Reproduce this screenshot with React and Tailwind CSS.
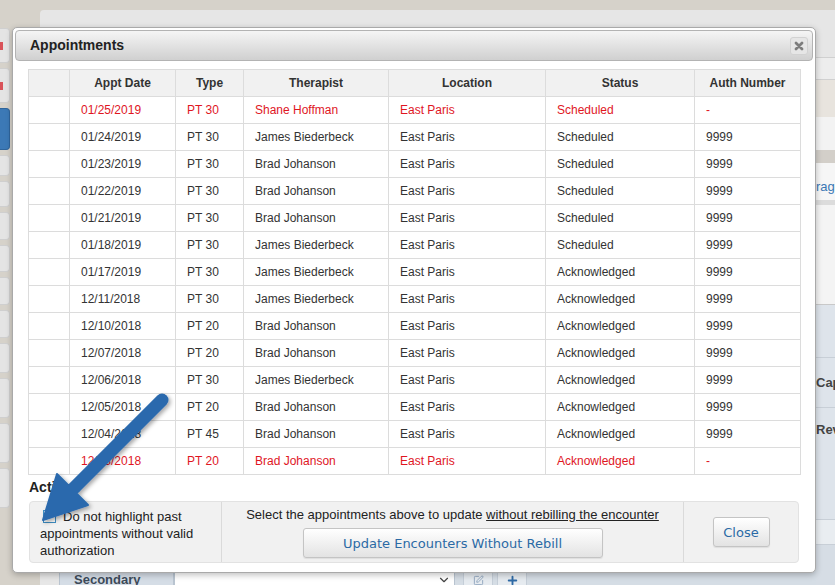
import { Plus, SquarePen, ChevronDown } from 'lucide-react';

const RED = 'text-[#e0161f]';

const rows = [
  ['01/25/2019', 'PT 30', 'Shane Hoffman', 'East Paris', 'Scheduled', '-', true],
  ['01/24/2019', 'PT 30', 'James Biederbeck', 'East Paris', 'Scheduled', '9999'],
  ['01/23/2019', 'PT 30', 'Brad Johanson', 'East Paris', 'Scheduled', '9999'],
  ['01/22/2019', 'PT 30', 'Brad Johanson', 'East Paris', 'Scheduled', '9999'],
  ['01/21/2019', 'PT 30', 'Brad Johanson', 'East Paris', 'Scheduled', '9999'],
  ['01/18/2019', 'PT 30', 'James Biederbeck', 'East Paris', 'Scheduled', '9999'],
  ['01/17/2019', 'PT 30', 'James Biederbeck', 'East Paris', 'Acknowledged', '9999'],
  ['12/11/2018', 'PT 30', 'James Biederbeck', 'East Paris', 'Acknowledged', '9999'],
  ['12/10/2018', 'PT 20', 'Brad Johanson', 'East Paris', 'Acknowledged', '9999'],
  ['12/07/2018', 'PT 20', 'Brad Johanson', 'East Paris', 'Acknowledged', '9999'],
  ['12/06/2018', 'PT 30', 'James Biederbeck', 'East Paris', 'Acknowledged', '9999'],
  ['12/05/2018', 'PT 20', 'Brad Johanson', 'East Paris', 'Acknowledged', '9999'],
  ['12/04/2018', 'PT 45', 'Brad Johanson', 'East Paris', 'Acknowledged', '9999'],
  ['12/03/2018', 'PT 20', 'Brad Johanson', 'East Paris', 'Acknowledged', '-', true],
];

const headers = ['', 'Appt Date', 'Type', 'Therapist', 'Location', 'Status', 'Auth Number'];
const widths = ['w-[41px]', 'w-[106px]', 'w-[68px]', 'w-[145px]', 'w-[157px]', 'w-[149px]', 'w-[106px]'];

const sideButtons = [
  { h: 'h-[35px]', mark: true },
  { h: 'h-[35px]', mark: true },
  { h: 'h-[42px]', blue: true },
  { h: 'h-[21px]' },
  { h: 'h-[26px]' },
  { h: 'h-[28px]' },
  { h: 'h-[27px]' },
  { h: 'h-[28px]' },
  { h: 'h-[28px]' },
  { h: 'h-[30px]' },
  { h: 'h-[40px]' },
  { h: 'h-[40px]' },
  { h: 'h-[40px]' },
];

function Sidebar() {
  return (
    <div className="w-[10px] shrink-0 flex flex-col gap-[5px] pt-[28px]">
      {sideButtons.map((b, i) => (
        <div
          key={i}
          className={`${b.h} shrink-0 rounded-r-[4px] border border-l-0 ${
            b.blue ? 'bg-[#3c79b6] border-[#2f659c]' : 'bg-[#e4e4e4] border-[#cfcfcf]'
          } flex items-center`}
        >
          {b.mark && <div className="w-[3px] h-[8px] bg-[#d9535a]" />}
        </div>
      ))}
    </div>
  );
}

function RightColumn() {
  return (
    <div className="w-[19px] shrink-0 flex flex-col overflow-hidden text-[13px] whitespace-nowrap">
      <div className="h-[22px] bg-[#ededed] border-b border-[#d0d0d0]" />
      <div className="h-[37px] bg-[#e8e4de]" />
      <div className="h-[33px] bg-[#f3f3f3]" />
      <div className="h-[13px] bg-[#d3cfc9]" />
      <div className="h-[37px] bg-[#f6f6f6] flex items-end pb-[4px] text-[#3b78b4]">rage</div>
      <div className="h-[5px] bg-[#dcdcdc]" />
      <div className="h-[100px] bg-[#f4f4f4] border-b border-[#c9c9c9]" />
      <div className="h-[53px] bg-[#dee4eb] border-b border-[#c8cfd7]" />
      <div className="h-[50px] bg-[#dee4eb] border-b border-[#c8cfd7] flex items-center font-bold text-[#444]">Cap</div>
      <div className="h-[112px] bg-[#dee4eb] border-b border-[#c8cfd7] pt-[12px] font-bold text-[#444]">Rev</div>
      <div className="h-[25px] bg-[#e9edf1] border-b border-[#c8cfd7]" />
      <div className="flex-1 bg-[#d6dde5]" />
    </div>
  );
}

function BottomRow() {
  return (
    <div className="mt-auto h-[24px] mb-[-7px] flex items-stretch pl-[19px] bg-[#e7e7e7]">
      <div className="w-[115px] bg-[#d5dde6] border border-[#b9c4d0] pl-[14px] flex items-center font-bold text-[13px] text-[#3d4b5a]">
        Secondary
      </div>
      <div className="w-[281px] bg-white border border-[#b9c4d0] flex items-center justify-end pr-[3px]">
        <ChevronDown size={14} strokeWidth={2} className="text-[#444]" />
      </div>
      <div className="flex-1 bg-[#d5dde5] flex items-stretch pl-[8px] gap-[4px]">
        <div className="w-[30px] bg-[#e6ebf0] border border-[#c5ced8] flex items-center justify-center">
          <SquarePen size={11} className="text-[#8ea4bd]" />
        </div>
        <div className="w-[30px] bg-[#e6ebf0] border border-[#c5ced8] flex items-center justify-center">
          <Plus size={13} strokeWidth={3.5} className="text-[#2e6aa6]" />
        </div>
      </div>
    </div>
  );
}

function Arrow() {
  return (
    <svg className="absolute left-0 top-0 pointer-events-none" width="835" height="585">
      <defs>
        <filter id="arrowShadow" x="-20%" y="-20%" width="140%" height="140%">
          <feDropShadow dx="2" dy="2" stdDeviation="2" floodColor="#000" floodOpacity="0.35" />
        </filter>
      </defs>
      <g filter="url(#arrowShadow)">
        <line x1="162" y1="400" x2="74" y2="488" stroke="#2a69ad" strokeWidth="13" strokeLinecap="round" />
        <polygon points="43,520 88,505 57,474" fill="#2a69ad" stroke="#2a69ad" strokeWidth="2" strokeLinejoin="round" />
      </g>
    </svg>
  );
}

function Button({ children, className = '' }) {
  return (
    <button
      className={`h-[30px] inline-flex items-center justify-center rounded-[3px] border border-[#c4c4c4] bg-linear-to-b from-white to-[#e3e3e3] shadow-[0_1px_1px_rgba(0,0,0,0.08)] font-['DejaVu_Sans',Verdana,sans-serif] text-[13px] text-[#2b6aa5] ${className}`}
    >
      {children}
    </button>
  );
}

function Modal() {
  return (
    <div className="absolute left-[12px] top-[27px] w-[804px] h-[546px] bg-white border border-[#a9a9a9] rounded-[5px] shadow-[0_2px_6px_rgba(0,0,0,0.25)] p-[2px] flex flex-col">
      <div className="h-[31px] shrink-0 rounded-[4px] border border-[#b3b3b3] bg-linear-to-b from-[#f5f5f5] to-[#d0d0d0] flex items-center pl-[14px] pr-[4px]">
        <span className="font-bold text-[14px] text-[#222]">Appointments</span>
        <div className="ml-auto w-[18px] h-[18px] rounded-[3px] bg-[#e6e6e6] border border-[#d2d2d2] flex items-center justify-center">
          <svg width="10" height="10" viewBox="0 0 10 10">
            <path d="M2 2 L8 8 M8 2 L2 8" stroke="#7d7d7d" strokeWidth="2.8" strokeLinecap="round" />
          </svg>
        </div>
      </div>

      <div className="px-[13px] flex flex-col">
        <table className="mt-[8px] w-[772px] border-collapse table-fixed text-[12px] text-[#333]">
          <colgroup>
            {widths.map((w, i) => (
              <col key={i} className={w} />
            ))}
          </colgroup>
          <thead>
            <tr className="h-[27px] bg-[#f1f1f1]">
              {headers.map((h, i) => (
                <th key={i} className="border border-[#dcdcdc] font-bold text-center p-0">
                  {h}
                </th>
              ))}
            </tr>
          </thead>
          <tbody>
            {rows.map((r) => (
              <tr key={r[0]} className="h-[27px]">
                <td className="border border-[#dcdcdc]" />
                {r.slice(0, 6).map((c, i) => (
                  <td key={i} className={`border border-[#dcdcdc] pl-[11px] py-0 ${r[6] ? RED : ''}`}>
                    {c}
                  </td>
                ))}
              </tr>
            ))}
          </tbody>
        </table>

        <div className="mt-[4px] pl-[1px] font-bold text-[14px] leading-[16px] text-[#222]">Actions</div>

        <div className="mt-[6px] mx-[1px] h-[62px] rounded-[4px] bg-[#f1f1f1] border border-[#e2e2e2] flex text-[13px] leading-[17px] text-[#222]">
          <div className="w-[192px] border-r border-[#dadada] pl-[10px] pr-[6px] pt-[6px]">
            <span className="inline-block w-[13px] h-[13px] border border-[#3e8ec4] bg-white align-[-2px] ml-[3px] mr-[7px]" />
            Do not highlight past appointments without valid authorization
          </div>
          <div className="w-[462px] border-r border-[#dadada] pt-[4px] flex flex-col items-center">
            <div>
              Select the appointments above to update <span className="underline">without rebilling the encounter</span>
            </div>
            <Button className="mt-[5px] w-[300px]">Update Encounters Without Rebill</Button>
          </div>
          <div className="flex-1 flex items-center justify-center">
            <Button className="w-[57px]">Close</Button>
          </div>
        </div>
      </div>
    </div>
  );
}

export default function App() {
  return (
    <div className="relative w-[835px] h-[585px] overflow-hidden bg-[#d6d2ca] font-['Liberation_Sans',Arial,sans-serif]">
      <div className="flex h-full">
        <Sidebar />
        <div className="w-[30px] shrink-0" />
        <div className="flex-1 flex flex-col pt-[10px]">
          <div className="h-[48px] shrink-0 bg-[#e6e6e6] rounded-tl-[4px] border-b border-[#d0d0d0]" />
          <div className="flex-1 flex">
            <div className="flex-1 flex flex-col bg-[#ebebeb]">
              <BottomRow />
            </div>
            <RightColumn />
          </div>
        </div>
      </div>
      <Modal />
      <Arrow />
    </div>
  );
}
